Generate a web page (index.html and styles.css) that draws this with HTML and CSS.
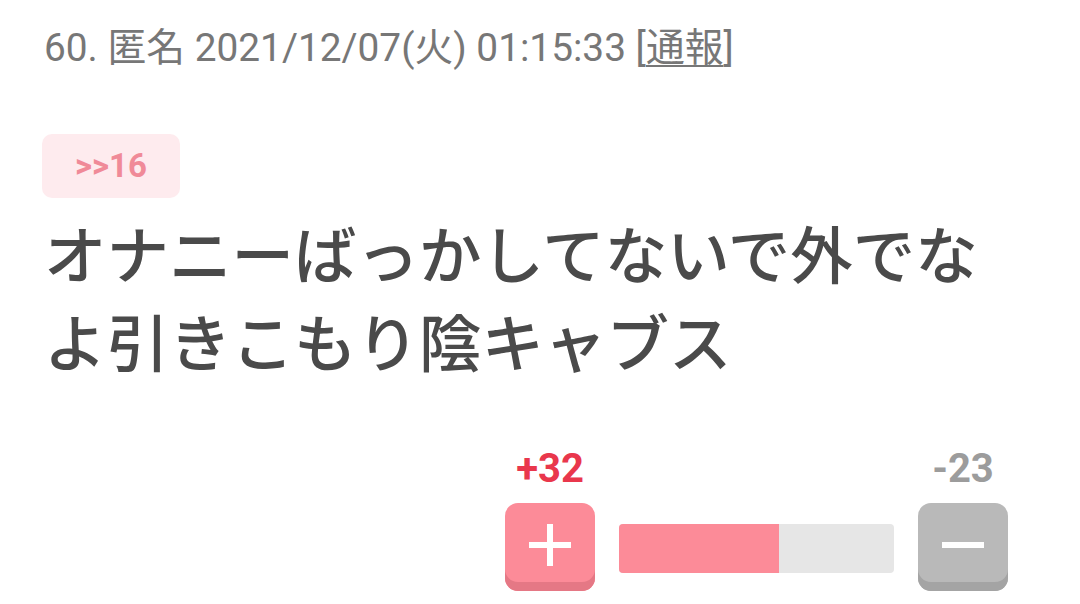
FILE: index.html
```html
<!DOCTYPE html>
<html lang="ja">
<head>
<meta charset="utf-8">
<link rel="stylesheet" href="styles.css">
</head>
<body>
<div class="post">
  <div class="meta">60. 匿名 2021/12/07(火) 01:15:33 <span class="report">[<u>通報</u>]</span></div>
  <div class="anchor">&gt;&gt;16</div>
  <div class="body">オナニーばっかしてないで外でな<br>よ引きこもり陰キャブス</div>
  <div class="vote">
    <div class="vcol">
      <div class="count plus-count">+32</div>
      <div class="btn plus">
        <svg width="42" height="42" viewBox="0 0 42 42"><rect x="18" y="0" width="6" height="42" fill="#fff"/><rect x="0" y="18" width="42" height="6" fill="#fff"/></svg>
      </div>
    </div>
    <div class="bar"><div class="fill" style="width:58.2%"></div></div>
    <div class="vcol">
      <div class="count minus-count">-23</div>
      <div class="btn minus">
        <svg width="42" height="6" viewBox="0 0 42 6"><rect x="0" y="0" width="42" height="6" fill="#fff"/></svg>
      </div>
    </div>
  </div>
</div>
</body>
</html>
```
FILE: styles.css
```css
html, body {
  margin: 0;
  padding: 0;
  background: #fff;
}
body {
  width: 1080px;
  height: 604px;
  overflow: hidden;
  font-family: Roboto, "Noto Sans CJK JP", sans-serif;
}
.post {
  padding: 26px 72px 0 44px;
}
.meta {
  font-size: 38.8px;
  line-height: 44px;
  color: #777;
}
.report u {
  text-decoration-thickness: 2px;
  text-underline-offset: 4px;
}
.anchor {
  display: inline-block;
  margin-top: 64px;
  margin-left: -2px;
  width: 138px;
  height: 64px;
  line-height: 64px;
  text-align: center;
  background: #feebee;
  border-radius: 10px;
  color: #f08a98;
  font-weight: 700;
  font-size: 33px;
}
.body {
  margin-top: 10px;
  font-family: "Noto Sans CJK JP", sans-serif;
  font-weight: 500;
  font-size: 62.5px;
  line-height: 88px;
  color: #4a4a4a;
}
.vote {
  display: flex;
  justify-content: flex-end;
  align-items: flex-end;
  margin-top: 65px;
  gap: 24px;
}
.vcol {
  display: flex;
  flex-direction: column;
  align-items: center;
  width: 90px;
}
.count {
  font-weight: 700;
  font-size: 40px;
  line-height: 40px;
  margin-bottom: 14px;
}
.plus-count { color: #e9374c; }
.minus-count { color: #9c9c9c; }
.btn {
  width: 90px;
  height: 88px;
  border-radius: 13px;
  display: flex;
  align-items: center;
  justify-content: center;
  box-sizing: border-box;
  padding-bottom: 4px;
}
.plus {
  background: #fc8b98;
  box-shadow: inset 0 -9px 0 #e57885;
}
.minus {
  background: #b9b9b9;
  box-shadow: inset 0 -9px 0 #a4a4a4;
}
.bar {
  width: 275px;
  height: 49px;
  margin-bottom: 18px;
  background: #e6e6e6;
  border-radius: 4px;
  overflow: hidden;
}
.fill {
  height: 100%;
  background: #fc8b98;
}
```
